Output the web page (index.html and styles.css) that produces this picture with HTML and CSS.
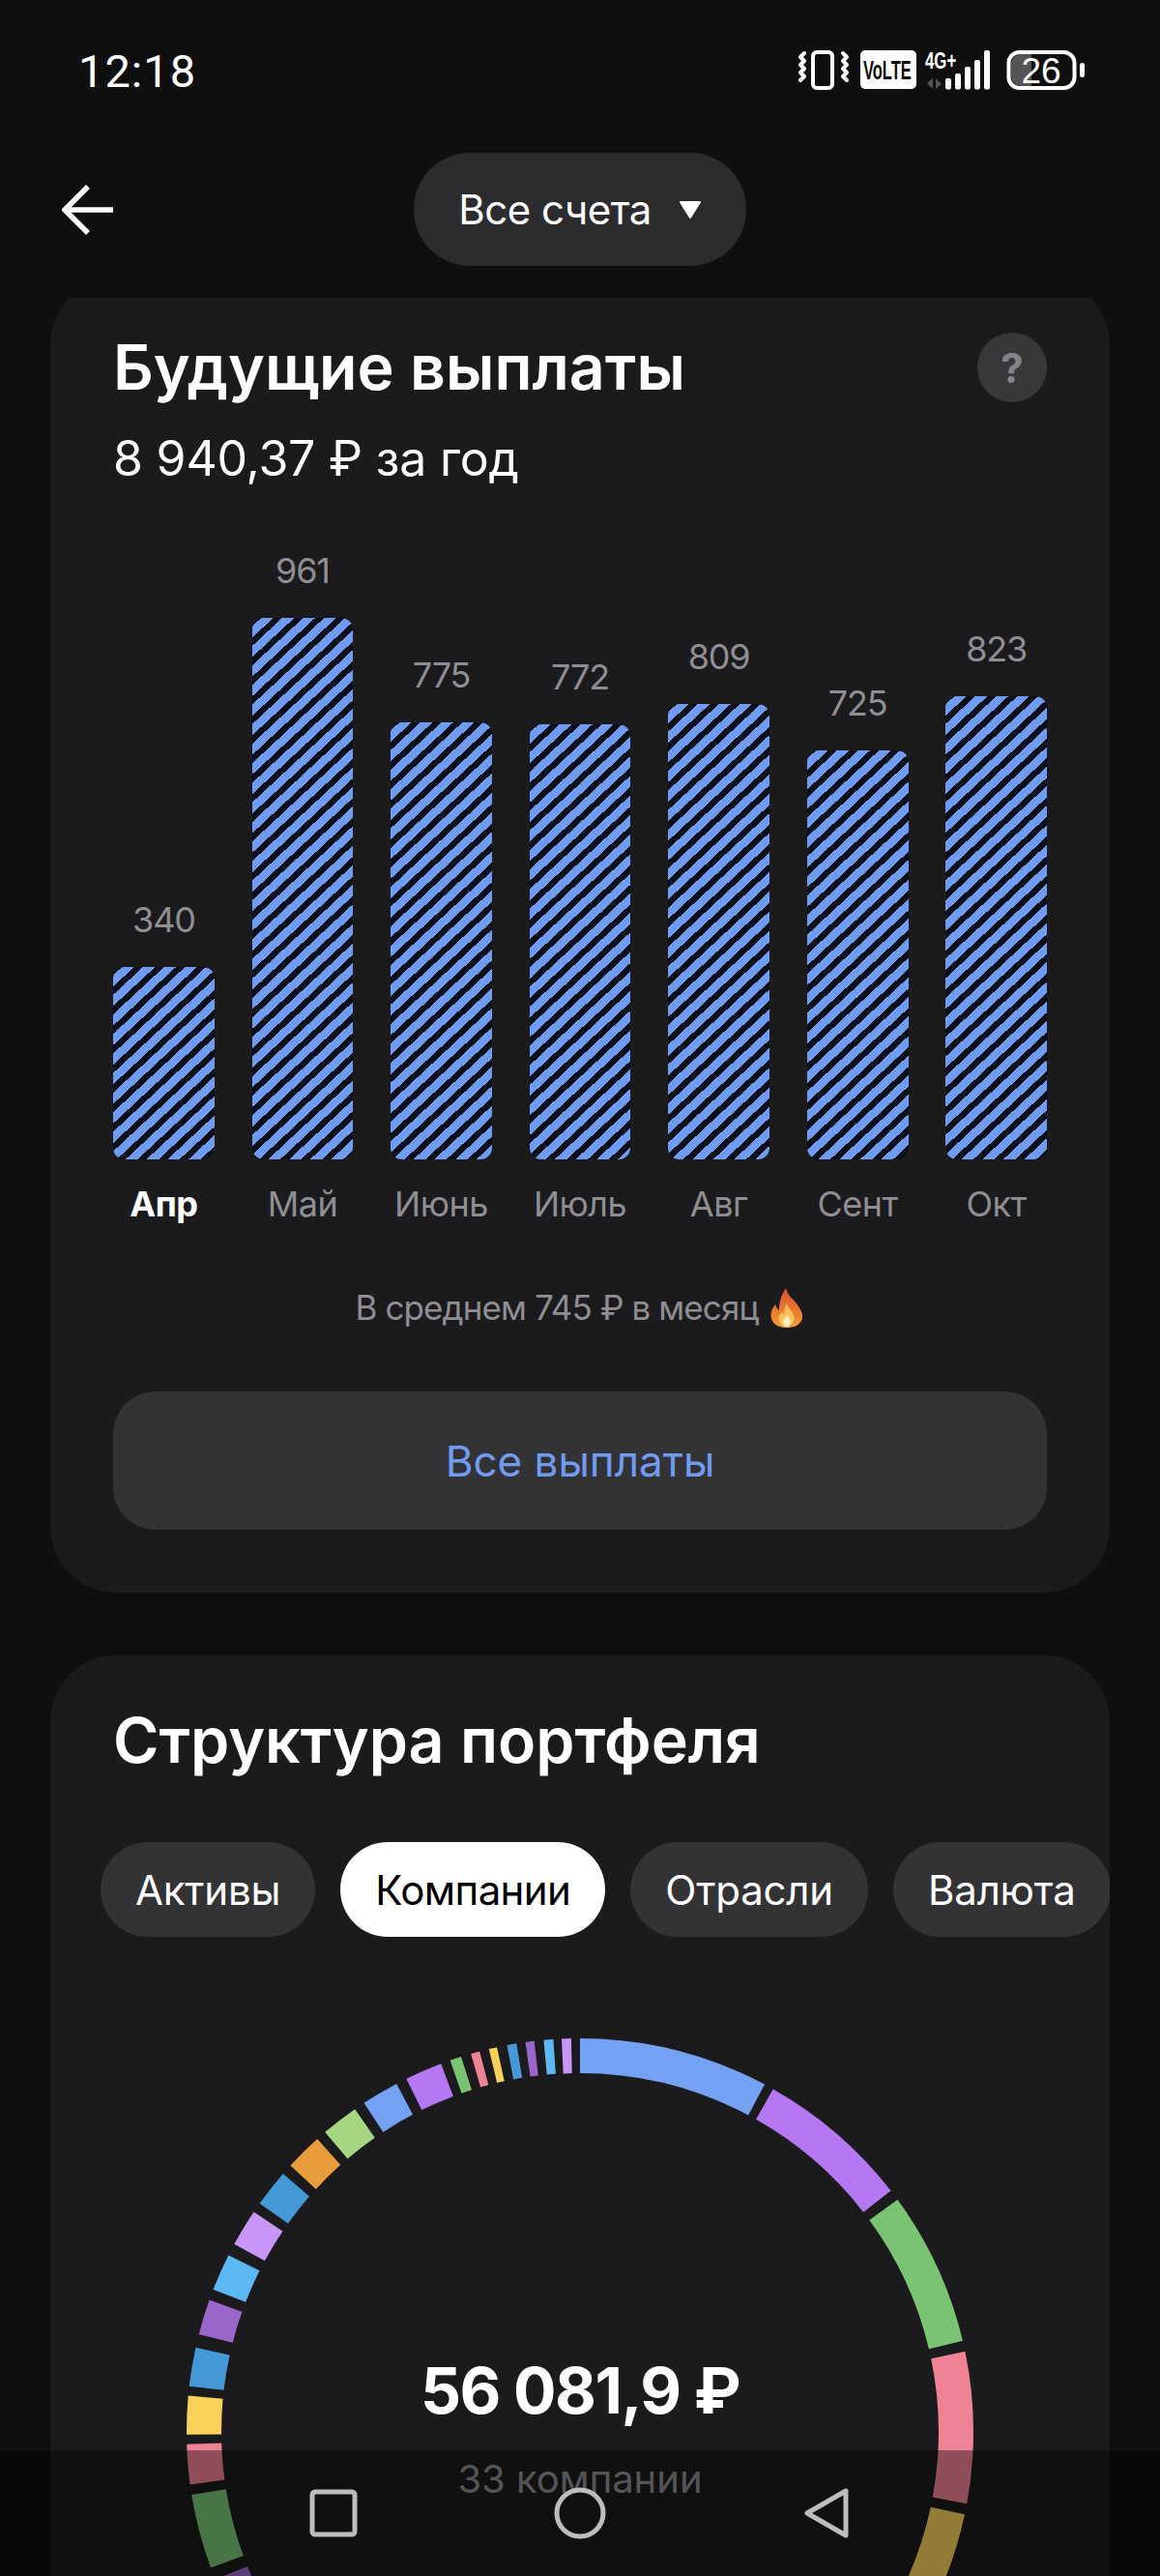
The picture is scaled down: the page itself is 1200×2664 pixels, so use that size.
FILE: index.html

```html
<!DOCTYPE html>
<html lang="ru">
<head>
    <meta charset="UTF-8">
    <meta name="viewport" content="width=device-width, initial-scale=1.0">
    <title>Будущие выплаты</title>
    <link rel="stylesheet" href="styles.css">
</head>
<body>
    <header class="app-header">
        <div class="status-bar">
            <span class="status-time">12:18</span>
            <svg class="status-icons" width="296" height="56" viewBox="826 46 296 56" aria-hidden="true">
                <rect x="841" y="55" width="20" height="37" rx="4" fill="none" stroke="#fff" stroke-width="4"/>
                <path d="M832 56l-4 4 4 4-4 4 4 4-4 4 4 4-4 4" fill="none" stroke="#fff" stroke-width="4" stroke-linecap="round" stroke-linejoin="round"/>
                <path d="M872 56l4 4-4 4 4 4-4 4 4 4-4 4 4 4" fill="none" stroke="#fff" stroke-width="4" stroke-linecap="round" stroke-linejoin="round"/>
                <rect x="890" y="53" width="58" height="40" rx="5" fill="#fff"/>
                <text transform="translate(893 83) scale(0.59 1)" font-family="Liberation Sans" font-size="28" font-weight="700" fill="#0f0f0f">VoLTE</text>
                <text transform="translate(957 72) scale(0.7 1)" font-family="Liberation Sans" font-size="24" font-weight="700" fill="#fff">4G+</text>
                <path d="M965 82v11l-6-6zM968 93V82l6 6z" fill="#555"/>
                <rect x="978" y="82" width="6" height="11.500" rx="2" fill="#fff"/>
                <rect x="988" y="77" width="6" height="16.500" rx="2" fill="#fff"/>
                <rect x="998" y="70" width="6" height="23.500" rx="2" fill="#fff"/>
                <rect x="1008" y="63" width="6" height="30.500" rx="2" fill="#fff"/>
                <rect x="1018" y="53" width="6" height="40.500" rx="2" fill="#fff"/>
                <path d="M1056 57h11v33h-11a10 10 0 0 1-10-10V67a10 10 0 0 1 10-10z" fill="#555"/>
                <rect x="1043.500" y="55" width="68" height="37" rx="11" fill="none" stroke="#fff" stroke-width="4"/>
                <text x="1077" y="87" text-anchor="middle" font-family="Liberation Sans" font-size="37" fill="#fff">26</text>
                <rect x="1117" y="66" width="5" height="15" rx="2.500" fill="#fff"/>
            </svg>
        </div>
        <div class="top-bar">
            <svg class="back-arrow" width="56" height="56" viewBox="0 0 56 56" aria-hidden="true">
                <path d="M53 28H4M27 4L3 28l24 24" fill="none" stroke="#fff" stroke-width="5.500"/>
            </svg>
            <div class="account-pill">
                <span>Все счета</span>
                <svg width="24" height="18" viewBox="0 0 24 18" aria-hidden="true">
                    <path d="M2 1h20L12 17z" fill="#fff" stroke="#fff" stroke-width="2" stroke-linejoin="round"/>
                </svg>
            </div>
        </div>
    </header>

    <main>
        <section class="card payouts">
            <div class="card-head">
                <h2>Будущие выплаты</h2>
                <span class="help-btn">?</span>
            </div>
            <p class="card-sub">8 940,37 ₽ за год</p>

            <div class="chart">
                <div class="chart-col">
                    <span class="chart-val">340</span>
                    <div class="chart-bar" style="height: 199px"></div>
                </div>
                <div class="chart-col">
                    <span class="chart-val">961</span>
                    <div class="chart-bar" style="height: 560px"></div>
                </div>
                <div class="chart-col">
                    <span class="chart-val">775</span>
                    <div class="chart-bar" style="height: 452px"></div>
                </div>
                <div class="chart-col">
                    <span class="chart-val">772</span>
                    <div class="chart-bar" style="height: 450px"></div>
                </div>
                <div class="chart-col">
                    <span class="chart-val">809</span>
                    <div class="chart-bar" style="height: 471px"></div>
                </div>
                <div class="chart-col">
                    <span class="chart-val">725</span>
                    <div class="chart-bar" style="height: 423px"></div>
                </div>
                <div class="chart-col">
                    <span class="chart-val">823</span>
                    <div class="chart-bar" style="height: 479px"></div>
                </div>
            </div>
            <div class="chart-months">
                <span class="current">Апр</span>
                <span>Май</span>
                <span>Июнь</span>
                <span>Июль</span>
                <span>Авг</span>
                <span>Сент</span>
                <span>Окт</span>
            </div>

            <p class="average">
                В среднем 745 ₽ в месяц
                <svg width="36" height="42" viewBox="0 0 36 42" aria-hidden="true">
                    <defs>
                        <linearGradient id="flame" x1="0" y1="0" x2="0" y2="1">
                            <stop offset="0" stop-color="#d9532c"/>
                            <stop offset="1" stop-color="#f59a32"/>
                        </linearGradient>
                    </defs>
                    <path d="M17 1c2 8 6 10 11 16 5 7 8 13 5 18-3 5-8 7-15 7S6 40 3 35c-3-6-1-12 3-17 1 3 2 5 4 6 0-8 2-16 7-23z" fill="url(#flame)"/>
                    <path d="M18 17c1 5 5 7 7 12 2 6-2 12-7 12s-10-5-8-11c1-2 2-4 3-5 0 2 1 3 2 3 0-4 1-8 3-11z" fill="#fbc15a"/>
                    <path d="M18 29c1 2 4 4 4 7s-2 5-4 5-5-2-4-5c0-3 3-4 4-7z" fill="#fdeec0"/>
                </svg>
            </p>

            <div class="wide-btn">Все выплаты</div>
        </section>

        <section class="card structure">
            <h2>Структура портфеля</h2>
            <div class="chips">
                <span class="chip">Активы</span>
                <span class="chip active">Компании</span>
                <span class="chip">Отрасли</span>
                <span class="chip">Валюта</span>
            </div>

            <div class="donut">
                <!-- pathLength 360, so the dash values below are degrees clockwise from the top -->
                <svg width="814" height="814" viewBox="0 0 814 814" aria-hidden="true">
                    <g class="donut-ring" transform="rotate(-90 407 407)">
                        <circle cx="407" cy="407" r="389" pathLength="360" stroke="#74a1f2" stroke-dasharray="28 332" stroke-dashoffset="0"/>
                        <circle cx="407" cy="407" r="389" pathLength="360" stroke="#b678f2" stroke-dasharray="22.800 337.200" stroke-dashoffset="-29.400"/>
                        <circle cx="407" cy="407" r="389" pathLength="360" stroke="#79c373" stroke-dasharray="22.800 337.200" stroke-dashoffset="-53.800"/>
                        <circle cx="407" cy="407" r="389" pathLength="360" stroke="#f08296" stroke-dasharray="22.300 337.700" stroke-dashoffset="-78.200"/>
                        <circle cx="407" cy="407" r="389" pathLength="360" stroke="#f5cf5e" stroke-dasharray="23 337" stroke-dashoffset="-102.100"/>
                        <circle cx="407" cy="407" r="389" pathLength="360" stroke="#9a66c9" stroke-dasharray="7 353" stroke-dashoffset="-241"/>
                        <circle cx="407" cy="407" r="389" pathLength="360" stroke="#79c373" stroke-dasharray="11 349" stroke-dashoffset="-249.800"/>
                        <circle cx="407" cy="407" r="389" pathLength="360" stroke="#f08296" stroke-dasharray="5.900 354.100" stroke-dashoffset="-262.300"/>
                        <circle cx="407" cy="407" r="389" pathLength="360" stroke="#fad25a" stroke-dasharray="5.700 354.300" stroke-dashoffset="-269.600"/>
                        <circle cx="407" cy="407" r="389" pathLength="360" stroke="#4599d6" stroke-dasharray="5.700 354.300" stroke-dashoffset="-276.700"/>
                        <circle cx="407" cy="407" r="389" pathLength="360" stroke="#9a66c9" stroke-dasharray="5.200 354.800" stroke-dashoffset="-284.400"/>
                        <circle cx="407" cy="407" r="389" pathLength="360" stroke="#5cb8f2" stroke-dasharray="5.500 354.500" stroke-dashoffset="-291.200"/>
                        <circle cx="407" cy="407" r="389" pathLength="360" stroke="#c896f9" stroke-dasharray="5.500 354.500" stroke-dashoffset="-298.500"/>
                        <circle cx="407" cy="407" r="389" pathLength="360" stroke="#4599d6" stroke-dasharray="5.500 354.500" stroke-dashoffset="-305.500"/>
                        <circle cx="407" cy="407" r="389" pathLength="360" stroke="#e89c3c" stroke-dasharray="5.500 354.500" stroke-dashoffset="-312.600"/>
                        <circle cx="407" cy="407" r="389" pathLength="360" stroke="#a6d67f" stroke-dasharray="5.500 354.500" stroke-dashoffset="-319.600"/>
                        <circle cx="407" cy="407" r="389" pathLength="360" stroke="#74a1f2" stroke-dasharray="5.500 354.500" stroke-dashoffset="-326.700"/>
                        <circle cx="407" cy="407" r="389" pathLength="360" stroke="#b678f2" stroke-dasharray="5.500 354.500" stroke-dashoffset="-333.800"/>
                        <circle cx="407" cy="407" r="389" pathLength="360" stroke="#79c373" stroke-dasharray="1.700 358.300" stroke-dashoffset="-340.700"/>
                        <circle cx="407" cy="407" r="389" pathLength="360" stroke="#f08296" stroke-dasharray="1.300 358.700" stroke-dashoffset="-343.900"/>
                        <circle cx="407" cy="407" r="389" pathLength="360" stroke="#fad25a" stroke-dasharray="1.200 358.800" stroke-dashoffset="-346.600"/>
                        <circle cx="407" cy="407" r="389" pathLength="360" stroke="#4599d6" stroke-dasharray="1.400 358.600" stroke-dashoffset="-349.300"/>
                        <circle cx="407" cy="407" r="389" pathLength="360" stroke="#9a66c9" stroke-dasharray="1.300 358.700" stroke-dashoffset="-352"/>
                        <circle cx="407" cy="407" r="389" pathLength="360" stroke="#5cb8f2" stroke-dasharray="1.400 358.600" stroke-dashoffset="-354.700"/>
                        <circle cx="407" cy="407" r="389" pathLength="360" stroke="#c896f9" stroke-dasharray="1.400 358.600" stroke-dashoffset="-357.300"/>
                    </g>
                </svg>
                <div class="donut-center">
                    <div class="donut-sum">56 081,9 ₽</div>
                    <div class="donut-count">33 компании</div>
                </div>
            </div>
        </section>
    </main>

    <nav class="nav-bar">
        <svg width="60" height="60" viewBox="0 0 60 60" aria-hidden="true">
            <rect x="8" y="8" width="44" height="44" rx="3" class="nav-icon"/>
        </svg>
        <svg width="60" height="60" viewBox="0 0 60 60" aria-hidden="true">
            <circle cx="30" cy="30" r="24" class="nav-icon"/>
        </svg>
        <svg width="60" height="60" viewBox="0 0 60 60" aria-hidden="true">
            <path d="M10 30L50 7v46z" class="nav-icon"/>
        </svg>
    </nav>
</body>
</html>
```

FILE: styles.css

```css
body {
    font-family: Inter, "Noto Sans", sans-serif;
    background: #0f0f0f;
    color: #fff;
    margin: 0;
    width: 1200px;
    height: 2664px;
    overflow: hidden;
    position: relative;
}

h2 {
    font-size: 64.500px;
    font-weight: 600;
    line-height: 76px;
    margin: 0;
}

.app-header {
    background: #0f0f0f;
    height: 308px;
    position: relative;
    z-index: 1;
}

.status-bar {
    display: flex;
    justify-content: space-between;
    align-items: center;
    height: 146px;
    padding: 0 78px 0 81px;
    box-sizing: border-box;
}

.status-time {
    font-family: Roboto, sans-serif;
    font-size: 47px;
    letter-spacing: 1px;
}

.status-icons {
    display: block;
}

.top-bar {
    display: grid;
    grid-template-columns: 1fr auto 1fr;
    align-items: center;
    margin-top: 12px;
}

.back-arrow {
    display: block;
    margin-left: 64px;
}

.account-pill {
    display: flex;
    align-items: center;
    justify-content: center;
    gap: 28px;
    width: 344px;
    height: 117px;
    background: #2c2c2e;
    border-radius: 58px;
    font-size: 42px;
    letter-spacing: -0.500px;
}

main {
    display: flex;
    flex-direction: column;
    gap: 65px;
    margin-top: -20px;
}

.card {
    background: #1b1b1d;
    border-radius: 68px;
    margin: 0 52px;
    padding: 0 65px;
    overflow: hidden;
}

.payouts {
    height: 1359px;
    box-sizing: border-box;
}

.card-head {
    display: flex;
    justify-content: space-between;
    align-items: center;
    padding-top: 54px;
}

.help-btn {
    display: flex;
    align-items: center;
    justify-content: center;
    width: 72px;
    height: 72px;
    border-radius: 50%;
    background: #38383a;
    color: #848488;
    font-size: 42px;
    font-weight: 700;
}

.card-sub {
    font-size: 50px;
    letter-spacing: -0.200px;
    line-height: 60px;
    margin: 0;
    padding-top: 26px;
}

.chart {
    display: flex;
    gap: 38.700px;
    height: 620px;
    align-items: flex-end;
    margin-top: 75px;
}

.chart-col {
    flex: 1;
    display: flex;
    flex-direction: column;
    align-items: center;
}

.chart-val {
    color: #8e8e93;
    font-size: 36px;
    letter-spacing: -1.200px;
    line-height: 40px;
    margin-bottom: 29px;
}

.chart-bar {
    width: 100%;
    border-radius: 12px;
    background: repeating-linear-gradient(137deg, #0a0f1a 0, #0a0f1a 6.300px, #6f9cf0 6.300px, #6f9cf0 14.800px);
}

.chart-months {
    display: flex;
    gap: 38.700px;
    margin-top: 22px;
    color: #8e8e93;
    font-size: 36px;
    letter-spacing: -0.500px;
    line-height: 48px;
}

.chart-months span {
    flex: 1;
    text-align: center;
}

.chart-months .current {
    color: #fff;
    font-weight: 700;
}

.average {
    display: flex;
    align-items: center;
    justify-content: center;
    gap: 12px;
    color: #8e8e93;
    font-size: 35px;
    letter-spacing: -0.900px;
    line-height: 48px;
    margin: 59px 0 0;
}

.wide-btn {
    display: flex;
    align-items: center;
    justify-content: center;
    height: 143px;
    margin-top: 63px;
    background: #333335;
    border-radius: 44px;
    color: #6f9cf0;
    font-size: 44px;
}

.structure {
    height: 1100px;
    padding-top: 50px;
}

.chips {
    display: flex;
    gap: 26px;
    margin: 67px -65px 0 -13px;
}

.chip {
    display: flex;
    align-items: center;
    flex: none;
    height: 98px;
    padding: 0 36px;
    border-radius: 49px;
    background: #333335;
    font-size: 42px;
    letter-spacing: -0.200px;
}

.chip.active {
    background: #fff;
    color: #000;
    letter-spacing: -0.600px;
}

.donut {
    position: relative;
    width: 814px;
    margin: 105px auto 0;
}

.donut svg {
    display: block;
}

.donut-ring circle {
    fill: none;
    stroke-width: 36;
}

.donut-center {
    position: absolute;
    top: 324px;
    left: 0;
    right: 0;
    text-align: center;
}

.donut-sum {
    font-size: 66px;
    font-weight: 700;
    letter-spacing: -1.500px;
    line-height: 80px;
}

.donut-count {
    color: #8e8e93;
    font-size: 40px;
    line-height: 50px;
    margin-top: 27px;
}

/* translucent system bar, the page stays visible under it */
.nav-bar {
    position: absolute;
    left: 0;
    right: 0;
    bottom: 0;
    height: 130px;
    background: rgba(0, 0, 0, 0.4);
    display: flex;
    justify-content: center;
    align-items: center;
    gap: 195px;
    z-index: 2;
}

.nav-icon {
    fill: none;
    stroke: #bdbdbd;
    stroke-width: 5;
    stroke-linejoin: round;
}
```
